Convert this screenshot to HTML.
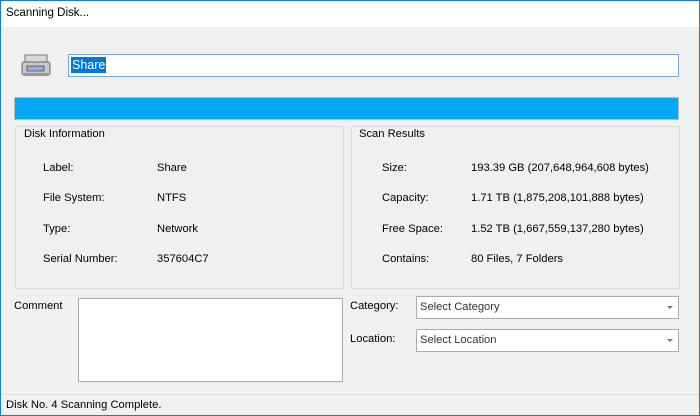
<!DOCTYPE html><html><head><style>
body{margin:0;width:700px;height:416px;overflow:hidden;font-family:"Liberation Sans",sans-serif;font-size:11.2px;color:#000;}
.win{position:absolute;left:0;top:0;width:698px;height:414px;border:1px solid #1e7bbd;background:#f0f0f0;}
.abs{position:absolute;}
.title{left:0;top:0;width:698px;height:26px;background:#fff;}
.gb{border:1px solid #dcdcdc;}
.lbl{position:absolute;font-size:11.2px;}
.cb{position:absolute;background:#fff;border:1px solid #adadad;height:21px;}
.cb span{position:absolute;left:3px;top:4px;color:#333;}
.cb i{position:absolute;right:5px;top:9px;border-left:3px solid transparent;border-right:3px solid transparent;border-top:3px solid #777;}
</style></head><body><div class="win">
<div class="abs title"><span class="abs" style="left:5px;top:6px;font-size:11.5px">Scanning Disk...</span></div>
<svg class="abs" style="left:20px;top:52px" width="32" height="26" viewBox="0 0 32 26"><rect x="4" y="2" width="22" height="8" fill="#d8d8d8" stroke="#777"/><rect x="1" y="9" width="28" height="13" rx="2" fill="#c8c8c8" stroke="#666"/><rect x="6" y="13" width="17" height="5" fill="#9ad" stroke="#666"/><rect x="3" y="20" width="24" height="3" fill="#999"/></svg>
<div class="abs" style="left:67px;top:53px;width:609px;height:21px;background:#fff;border:1px solid #7aa7d3"><span class="abs" style="left:2px;top:2px;background:#0078d7;color:#fff;padding:0 1px;font-size:12.5px;line-height:16px">Share</span></div>
<div class="abs" style="left:13px;top:96px;width:663px;height:21px;background:#06a8f3;border:1px solid #bcbcbc"></div>
<div class="abs gb" style="left:14px;top:125px;width:327px;height:161px"></div>
<div class="abs" style="left:20px;top:127px;background:#f0f0f0;padding:0 3px">Disk Information</div>
<div class="abs gb" style="left:350px;top:125px;width:327px;height:161px"></div>
<div class="abs" style="left:355px;top:127px;background:#f0f0f0;padding:0 3px">Scan Results</div>
<div class="lbl" style="left:42px;top:161px">Label:</div><div class="lbl" style="left:156px;top:161px">Share</div>
<div class="lbl" style="left:42px;top:191px">File System:</div><div class="lbl" style="left:156px;top:191px">NTFS</div>
<div class="lbl" style="left:42px;top:222px">Type:</div><div class="lbl" style="left:156px;top:222px">Network</div>
<div class="lbl" style="left:42px;top:252px">Serial Number:</div><div class="lbl" style="left:156px;top:252px">357604C7</div>
<div class="lbl" style="left:381px;top:161px">Size:</div><div class="lbl" style="left:470px;top:161px">193.39 GB (207,648,964,608 bytes)</div>
<div class="lbl" style="left:381px;top:191px">Capacity:</div><div class="lbl" style="left:470px;top:191px">1.71 TB (1,875,208,101,888 bytes)</div>
<div class="lbl" style="left:381px;top:222px">Free Space:</div><div class="lbl" style="left:470px;top:222px">1.52 TB (1,667,559,137,280 bytes)</div>
<div class="lbl" style="left:381px;top:252px">Contains:</div><div class="lbl" style="left:470px;top:252px">80 Files, 7 Folders</div>
<div class="lbl" style="left:13px;top:299px">Comment</div>
<div class="abs" style="left:77px;top:297px;width:263px;height:82px;background:#fff;border:1px solid #adadad"></div>
<div class="lbl" style="left:349px;top:299px">Category:</div>
<div class="cb" style="left:415px;top:295px;width:261px"><span>Select Category</span><i></i></div>
<div class="lbl" style="left:349px;top:332px">Location:</div>
<div class="cb" style="left:415px;top:328px;width:261px"><span>Select Location</span><i></i></div>
<div class="abs" style="left:0;top:393px;width:698px;height:1px;background:#dcdcdc"></div>
<div class="lbl" style="left:5px;top:398px">Disk No. 4 Scanning Complete.</div>
</div></body></html>
